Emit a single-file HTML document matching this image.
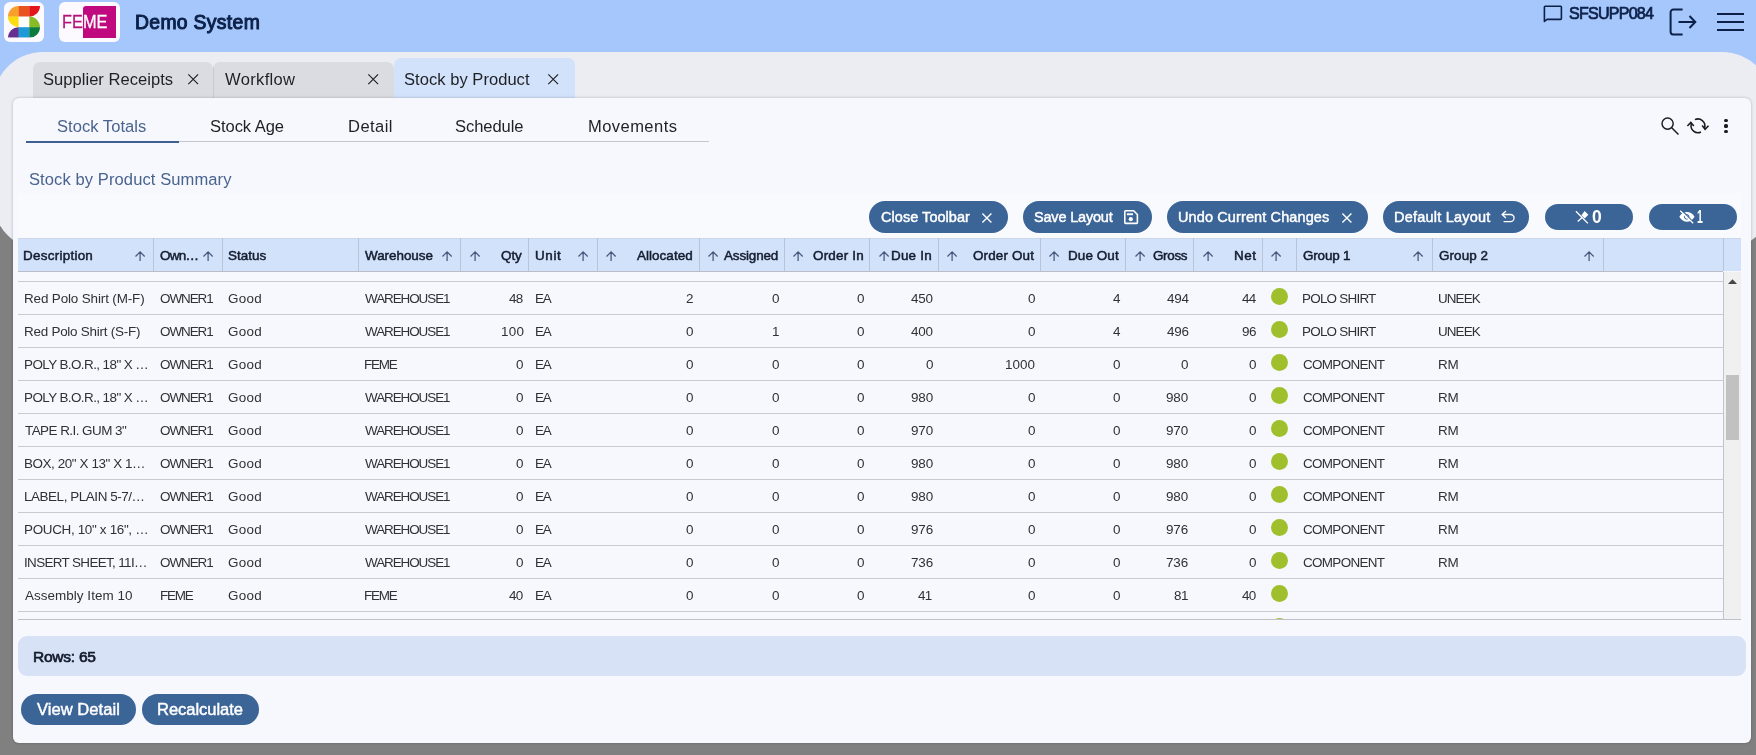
<!DOCTYPE html>
<html lang="en">
<head>
<meta charset="utf-8">
<title>Demo System - Stock by Product</title>
<style>
*{box-sizing:border-box;margin:0;padding:0}
html,body{width:1756px;height:755px;overflow:hidden;background:#808080;font-family:"Liberation Sans",sans-serif}
.a{position:absolute}
.t{position:absolute;white-space:pre;line-height:20px;height:20px}
#stage{left:0;top:0;width:1756px;height:755px;overflow:hidden;will-change:transform}
#top{left:0;top:0;width:1756px;height:200px;background:#a5c7fb}
#gp{left:-7.5px;top:52px;width:1779px;height:198.4px;border-radius:50px;background:#ecedf2}
.logo{background:#fdfaff;border-radius:6px;top:2px;height:40px}
.tab{top:62px;height:36px;background:#dbdce1;border-radius:7px 7px 0 0}
#wp{left:13px;top:98px;width:1738px;height:645px;border-radius:6px;background:#f7f8fd;box-shadow:0 0 3px rgba(0,0,0,.25)}
.pill{background:#3b6497;border-radius:16px}
.hl{background:#cacbd1;height:1px;left:18px;width:1705.5px}
.vb{top:238px;height:33px;width:1px;background:#b9c4da}
.pl{-webkit-text-stroke:0.45px #fff}
.sb{-webkit-text-stroke:0.5px currentColor}
.sb2{-webkit-text-stroke:0.7px currentColor}
.sb3{-webkit-text-stroke:1px currentColor}
.lg{-webkit-text-stroke:0.3px currentColor}
svg{position:absolute;overflow:visible}
.dot{width:17px;height:17px;border-radius:50%;background:#9fc02c;left:1271px}
</style>
</head>
<body>
<div class="a" id="stage">
<div class="a" id="top"></div>
<div class="a" id="gp"></div>
<div class="a logo" style="left:4px;width:40px"></div>
<svg style="left:8px;top:6.2px" width="32" height="31.8" viewBox="0 0 3 3" preserveAspectRatio="none">
<defs><clipPath id="sclip"><path d="M1,2 A1,1 0 0 1 1,0 L3,0 A1,1 0 0 1 2,1 A1,1 0 0 1 2,3 L0,3 A1,1 0 0 1 1,2 Z"/></clipPath></defs>
<g clip-path="url(#sclip)">
<rect x="0" y="0" width="1.02" height="1.02" fill="#f8a02c"/><rect x="1" y="0" width="1.02" height="1.02" fill="#e9531f"/><rect x="2" y="0" width="1" height="1.02" fill="#e3151b"/>
<rect x="0" y="1" width="1.02" height="1.02" fill="#fcdc10"/><rect x="1" y="1" width="1.02" height="1.02" fill="#ffffff"/><rect x="2" y="1" width="1" height="1.02" fill="#88bc27"/>
<rect x="0" y="2" width="1.02" height="1" fill="#65308f"/><rect x="1" y="2" width="1.02" height="1" fill="#1c9bd8"/><rect x="2" y="2" width="1" height="1" fill="#0c7c3d"/>
</g></svg>
<div class="a logo" style="left:59px;width:61px"></div>
<div class="a" style="left:82.6px;top:6.1px;width:33.3px;height:31.7px;background:#c0087f;border-radius:3px 0 0 0"></div>
<svg style="left:1543px;top:5px" width="20" height="18" viewBox="0 0 20 18"><path d="M1.4,16.4 V2.1 a.8,.8 0 0 1 .8,-.8 H17.6 a.8,.8 0 0 1 .8,.8 V13.6 a.8,.8 0 0 1 -.8,.8 H4.0 Z" fill="none" stroke="#0c2048" stroke-width="1.6" stroke-linejoin="round"/></svg>
<svg style="left:1668px;top:8px" width="30" height="28" viewBox="0 0 30 28"><path d="M14.6,1.6 H5.2 a2.6,2.6 0 0 0 -2.6,2.6 V23.8 a2.6,2.6 0 0 0 2.6,2.6 H14.6" fill="none" stroke="#0c2048" stroke-width="2"/><path d="M10.5,14 H27 M21.5,8 L27.3,14 L21.5,20" fill="none" stroke="#0c2048" stroke-width="2"/></svg>
<div class="a" style="left:1717.2px;top:12.8px;width:26.8px;height:2px;background:#0c2048"></div>
<div class="a" style="left:1717.2px;top:21px;width:26.8px;height:2px;background:#0c2048"></div>
<div class="a" style="left:1717.2px;top:29.2px;width:26.8px;height:2px;background:#0c2048"></div>
<div class="a tab" style="left:33.3px;width:179.7px"></div>
<div class="a tab" style="left:213px;width:180.5px"></div>
<div class="a" style="left:212.5px;top:67px;width:1px;height:31px;background:#c9cad0"></div>
<div class="a tab" style="left:393.5px;width:181.5px;top:57.5px;height:41px;background:#d2e2fb"></div>
<div class="a" id="wp"></div>
<svg style="left:187.9px;top:74.4px" width="10.4" height="10.4" viewBox="0 0 10 10"><path d="M0.3,0.3 L9.7,9.7 M9.7,0.3 L0.3,9.7" stroke="#1e1e20" stroke-width="1.1" fill="none"/></svg>
<svg style="left:367.9px;top:74.4px" width="10.4" height="10.4" viewBox="0 0 10 10"><path d="M0.3,0.3 L9.7,9.7 M9.7,0.3 L0.3,9.7" stroke="#1e1e20" stroke-width="1.1" fill="none"/></svg>
<svg style="left:547.6px;top:74.4px" width="10.4" height="10.4" viewBox="0 0 10 10"><path d="M0.3,0.3 L9.7,9.7 M9.7,0.3 L0.3,9.7" stroke="#1e1e20" stroke-width="1.1" fill="none"/></svg>
<div class="a" style="left:26px;top:141px;width:683px;height:1px;background:#c4c6cc"></div>
<div class="a" style="left:26px;top:140.7px;width:152.7px;height:2.2px;background:#3f5f8f"></div>
<svg style="left:1661px;top:117.4px" width="18" height="18" viewBox="0 0 18 18"><circle cx="6.6" cy="6.6" r="5.6" fill="none" stroke="#1c1c1f" stroke-width="1.45"/><path d="M10.7,10.7 L17.5,17.5" stroke="#1c1c1f" stroke-width="1.5"/></svg>
<svg style="left:1687px;top:117px" width="22" height="18" viewBox="0 0 22 18"><path d="M7.93,2.65 A6.9,6.9 0 0 1 17.61,10.64 L18.1,12.2 M13.97,15.05 A6.9,6.9 0 0 1 4.29,7.06 L3.8,5.5" fill="none" stroke="#1c1c1f" stroke-width="1.55"/><path d="M15.2,8.6 L18.1,12.3 L21.5,8.8 M0.4,9.1 L3.8,5.4 L6.8,9.0" fill="none" stroke="#1c1c1f" stroke-width="1.55"/></svg>
<div class="a" style="left:1724.4px;top:118.50px;width:3.2px;height:3.2px;border-radius:50%;background:#1c1c1f"></div>
<div class="a" style="left:1724.4px;top:124.35px;width:3.2px;height:3.2px;border-radius:50%;background:#1c1c1f"></div>
<div class="a" style="left:1724.4px;top:130.20px;width:3.2px;height:3.2px;border-radius:50%;background:#1c1c1f"></div>
<div class="a" style="left:18px;top:193px;width:1723px;height:45px;background:#f9fafe"></div>
<div class="a pill" style="left:868.9px;top:201.2px;width:139.2px;height:31.4px"></div>
<div class="a pill" style="left:1023.2px;top:201.2px;width:128.6px;height:31.4px"></div>
<div class="a pill" style="left:1167.1px;top:201.2px;width:200.7px;height:31.4px"></div>
<div class="a pill" style="left:1383.2px;top:201.2px;width:145.7px;height:31.4px"></div>
<div class="a pill" style="left:1544.8px;top:204px;width:88.4px;height:25.8px"></div>
<div class="a pill" style="left:1648.7px;top:204px;width:88.3px;height:25.8px"></div>
<svg style="left:982.2px;top:212.5px" width="9.8" height="9.8" viewBox="0 0 10 10"><path d="M0.4,0.4 L9.6,9.6 M9.6,0.4 L0.4,9.6" stroke="#fff" stroke-width="1.4" fill="none"/></svg>
<svg style="left:1342.3px;top:212.5px" width="9.8" height="9.8" viewBox="0 0 10 10"><path d="M0.4,0.4 L9.6,9.6 M9.6,0.4 L0.4,9.6" stroke="#fff" stroke-width="1.4" fill="none"/></svg>
<svg style="left:1124px;top:209.9px" width="14.2" height="14.2" viewBox="0 0 14.2 14.2"><path d="M1.6,0.8 H9.7 L13.4,4.5 V12.6 a.8,.8 0 0 1 -.8,.8 H1.6 a.8,.8 0 0 1 -.8,-.8 V1.6 a.8,.8 0 0 1 .8,-.8 Z" fill="none" stroke="#fff" stroke-width="1.6"/><rect x="2.9" y="3.3" width="6.1" height="1.9" fill="#fff"/><circle cx="6.8" cy="9.2" r="2.1" fill="#fff"/></svg>
<svg style="left:1501px;top:210px" width="14" height="13" viewBox="0 0 14 13"><path d="M5,1 L1.1,4.5 L4.9,8 M1.3,4.5 H9.5 a3.55,3.55 0 0 1 0,7.1 H2.6" fill="none" stroke="#fff" stroke-width="1.3"/></svg>
<svg style="left:1575px;top:210px" width="14" height="14" viewBox="0 0 14 14"><path d="M9.6,1.0 L13.4,4.8 L9.6,8.4 L6.4,5.3 Z" fill="#fff"/><path d="M0.9,1.2 L12.9,13.4 M7.4,7.3 L2.7,11.6" stroke="#fff" stroke-width="1.35" fill="none"/></svg>
<svg style="left:1678.6px;top:210.4px" width="16" height="14" viewBox="0 0 16 14"><path d="M0.3,6.8 C2.4,3.2 5,1.9 7.9,1.9 C10.8,1.9 13.4,3.2 15.6,6.8 C13.4,10.4 10.8,11.8 7.9,11.8 C5,11.8 2.4,10.4 0.3,6.8 Z" fill="#fff"/><circle cx="7.7" cy="6.8" r="2.3" fill="none" stroke="#3b6497" stroke-width="1"/><path d="M2.2,-0.2 L15,12.9" stroke="#3b6497" stroke-width="1.3"/><path d="M1.2,0.7 L14.2,13.2" stroke="#fff" stroke-width="1.3"/></svg>
<div class="a" style="left:17.7px;top:238.4px;width:1722.9px;height:33px;background:#d2e2fb"></div>
<div class="a" style="left:17.7px;top:271px;width:1705.8px;height:1px;background:#b9bcc6"></div>
<div class="a" style="left:17.7px;top:238px;width:1722.9px;height:1px;background:#cdd6e6"></div>
<div class="a vb" style="left:153.0px"></div>
<div class="a vb" style="left:222.0px"></div>
<div class="a vb" style="left:358.0px"></div>
<div class="a vb" style="left:460.0px"></div>
<div class="a vb" style="left:528.2px"></div>
<div class="a vb" style="left:596.8px"></div>
<div class="a vb" style="left:698.8px"></div>
<div class="a vb" style="left:783.9px"></div>
<div class="a vb" style="left:869.0px"></div>
<div class="a vb" style="left:938.1px"></div>
<div class="a vb" style="left:1040.1px"></div>
<div class="a vb" style="left:1125.0px"></div>
<div class="a vb" style="left:1193.2px"></div>
<div class="a vb" style="left:1261.9px"></div>
<div class="a vb" style="left:1296.1px"></div>
<div class="a vb" style="left:1431.9px"></div>
<div class="a vb" style="left:1602.8px"></div>
<div class="a vb" style="left:1723.0px"></div>
<svg style="left:134.7px;top:250.8px" width="10.2" height="10" viewBox="0 0 10.2 10"><path d="M5.1,10 V1 M0.5,5.5 L5.1,0.9 L9.7,5.5" fill="none" stroke="#46587b" stroke-width="1.25"/></svg>
<svg style="left:202.7px;top:250.8px" width="10.2" height="10" viewBox="0 0 10.2 10"><path d="M5.1,10 V1 M0.5,5.5 L5.1,0.9 L9.7,5.5" fill="none" stroke="#46587b" stroke-width="1.25"/></svg>
<svg style="left:441.8px;top:250.8px" width="10.2" height="10" viewBox="0 0 10.2 10"><path d="M5.1,10 V1 M0.5,5.5 L5.1,0.9 L9.7,5.5" fill="none" stroke="#46587b" stroke-width="1.25"/></svg>
<svg style="left:469.5px;top:250.8px" width="10.2" height="10" viewBox="0 0 10.2 10"><path d="M5.1,10 V1 M0.5,5.5 L5.1,0.9 L9.7,5.5" fill="none" stroke="#46587b" stroke-width="1.25"/></svg>
<svg style="left:578px;top:250.8px" width="10.2" height="10" viewBox="0 0 10.2 10"><path d="M5.1,10 V1 M0.5,5.5 L5.1,0.9 L9.7,5.5" fill="none" stroke="#46587b" stroke-width="1.25"/></svg>
<svg style="left:605.9px;top:250.8px" width="10.2" height="10" viewBox="0 0 10.2 10"><path d="M5.1,10 V1 M0.5,5.5 L5.1,0.9 L9.7,5.5" fill="none" stroke="#46587b" stroke-width="1.25"/></svg>
<svg style="left:708.2px;top:250.8px" width="10.2" height="10" viewBox="0 0 10.2 10"><path d="M5.1,10 V1 M0.5,5.5 L5.1,0.9 L9.7,5.5" fill="none" stroke="#46587b" stroke-width="1.25"/></svg>
<svg style="left:793.3px;top:250.8px" width="10.2" height="10" viewBox="0 0 10.2 10"><path d="M5.1,10 V1 M0.5,5.5 L5.1,0.9 L9.7,5.5" fill="none" stroke="#46587b" stroke-width="1.25"/></svg>
<svg style="left:878.5px;top:250.8px" width="10.2" height="10" viewBox="0 0 10.2 10"><path d="M5.1,10 V1 M0.5,5.5 L5.1,0.9 L9.7,5.5" fill="none" stroke="#46587b" stroke-width="1.25"/></svg>
<svg style="left:947.1px;top:250.8px" width="10.2" height="10" viewBox="0 0 10.2 10"><path d="M5.1,10 V1 M0.5,5.5 L5.1,0.9 L9.7,5.5" fill="none" stroke="#46587b" stroke-width="1.25"/></svg>
<svg style="left:1049.1px;top:250.8px" width="10.2" height="10" viewBox="0 0 10.2 10"><path d="M5.1,10 V1 M0.5,5.5 L5.1,0.9 L9.7,5.5" fill="none" stroke="#46587b" stroke-width="1.25"/></svg>
<svg style="left:1134.8px;top:250.8px" width="10.2" height="10" viewBox="0 0 10.2 10"><path d="M5.1,10 V1 M0.5,5.5 L5.1,0.9 L9.7,5.5" fill="none" stroke="#46587b" stroke-width="1.25"/></svg>
<svg style="left:1202.8px;top:250.8px" width="10.2" height="10" viewBox="0 0 10.2 10"><path d="M5.1,10 V1 M0.5,5.5 L5.1,0.9 L9.7,5.5" fill="none" stroke="#46587b" stroke-width="1.25"/></svg>
<svg style="left:1270.6px;top:250.8px" width="10.2" height="10" viewBox="0 0 10.2 10"><path d="M5.1,10 V1 M0.5,5.5 L5.1,0.9 L9.7,5.5" fill="none" stroke="#46587b" stroke-width="1.25"/></svg>
<svg style="left:1413.2px;top:250.8px" width="10.2" height="10" viewBox="0 0 10.2 10"><path d="M5.1,10 V1 M0.5,5.5 L5.1,0.9 L9.7,5.5" fill="none" stroke="#46587b" stroke-width="1.25"/></svg>
<svg style="left:1583.5px;top:250.8px" width="10.2" height="10" viewBox="0 0 10.2 10"><path d="M5.1,10 V1 M0.5,5.5 L5.1,0.9 L9.7,5.5" fill="none" stroke="#46587b" stroke-width="1.25"/></svg>
<div class="a hl" style="top:281px"></div>
<div class="a hl" style="top:314px"></div>
<div class="a hl" style="top:347px"></div>
<div class="a hl" style="top:380px"></div>
<div class="a hl" style="top:413px"></div>
<div class="a hl" style="top:446px"></div>
<div class="a hl" style="top:479px"></div>
<div class="a hl" style="top:512px"></div>
<div class="a hl" style="top:545px"></div>
<div class="a hl" style="top:578px"></div>
<div class="a hl" style="top:611px"></div>
<div class="a" style="left:17.7px;top:619px;width:1723px;height:1px;background:#c0c1c8"></div>
<div class="a dot" style="top:288.0px"></div>
<div class="a dot" style="top:321.0px"></div>
<div class="a dot" style="top:354.0px"></div>
<div class="a dot" style="top:387.0px"></div>
<div class="a dot" style="top:420.0px"></div>
<div class="a dot" style="top:453.0px"></div>
<div class="a dot" style="top:486.0px"></div>
<div class="a dot" style="top:519.0px"></div>
<div class="a dot" style="top:552.0px"></div>
<div class="a dot" style="top:585.0px"></div>
<div class="a" style="left:1271.1px;top:617.9px;width:17px;height:1.2px;overflow:hidden"><div class="dot" style="left:0;top:0"></div></div>
<div class="a" style="left:1723px;top:271.5px;width:17.6px;height:347.5px;background:#f0f0f0;border-left:1px solid #c3c4ca"></div>
<div class="a" style="left:1726px;top:374.8px;width:12.9px;height:65.4px;background:#c1c1c1"></div>
<svg style="left:1728px;top:278.6px" width="9" height="5" viewBox="0 0 9 5"><path d="M0,5 L4.5,0.3 L9,5 Z" fill="#454545"/></svg>
<div class="a" style="left:18px;top:636px;width:1728px;height:40px;border-radius:9px;background:#d8e2f6"></div>
<div class="a pill" style="left:21.1px;top:693.5px;width:115px;height:31.3px"></div>
<div class="a pill" style="left:142px;top:693.5px;width:117px;height:31.3px"></div>
<span class="t sb3" style="left:135.00px;top:12.00px;font-size:19.35px;color:#0c2048;letter-spacing:0.329px;">Demo System</span>
<span class="t sb2" style="left:1569.00px;top:3.00px;font-size:16.04px;color:#0c2048;letter-spacing:-0.748px;">SFSUPP084</span>
<span class="t lg" style="left:62.10px;top:12.00px;font-size:18.63px;color:#b3127a;transform:scaleX(0.875);transform-origin:0 0;">FE</span>
<span class="t lg" style="left:83.49px;top:12.00px;font-size:18.63px;color:#fff;transform:scaleX(0.878);transform-origin:0 0;">ME</span>
<span class="t " style="left:43.00px;top:70.00px;font-size:16.56px;color:#1f2024;letter-spacing:0.023px;">Supplier Receipts</span>
<span class="t " style="left:225.00px;top:70.00px;font-size:16.56px;color:#1f2024;letter-spacing:0.334px;">Workflow</span>
<span class="t " style="left:404.00px;top:70.00px;font-size:16.56px;color:#1f2024;letter-spacing:0.029px;">Stock by Product</span>
<span class="t " style="left:57.00px;top:117.00px;font-size:16.56px;color:#49638f;letter-spacing:0.032px;">Stock Totals</span>
<span class="t " style="left:210.00px;top:117.00px;font-size:16.56px;color:#1f2024;letter-spacing:-0.062px;">Stock Age</span>
<span class="t " style="left:348.00px;top:117.00px;font-size:16.56px;color:#1f2024;letter-spacing:0.448px;">Detail</span>
<span class="t " style="left:455.00px;top:117.00px;font-size:16.56px;color:#1f2024;letter-spacing:-0.065px;">Schedule</span>
<span class="t " style="left:588.00px;top:117.00px;font-size:16.56px;color:#1f2024;letter-spacing:0.425px;">Movements</span>
<span class="t " style="left:29.00px;top:170.00px;font-size:16.56px;color:#49638f;letter-spacing:0.087px;">Stock by Product Summary</span>
<span class="t pl" style="left:881.00px;top:207.00px;font-size:14.49px;color:#fff;letter-spacing:0.050px;">Close Toolbar</span>
<span class="t pl" style="left:1034.00px;top:207.00px;font-size:14.49px;color:#fff;letter-spacing:-0.177px;">Save Layout</span>
<span class="t pl" style="left:1178.00px;top:207.00px;font-size:14.49px;color:#fff;letter-spacing:0.121px;">Undo Current Changes</span>
<span class="t pl" style="left:1394.00px;top:207.00px;font-size:14.49px;color:#fff;letter-spacing:0.219px;">Default Layout</span>
<span class="t " style="left:1592.46px;top:207.00px;font-size:17.59px;color:#fff;font-weight:700;transform:scaleX(0.993);transform-origin:0 0;">0</span>
<span class="t " style="left:1697.16px;top:207.00px;font-size:17.59px;color:#fff;font-weight:700;transform:scaleX(0.601);transform-origin:0 0;">1</span>
<span class="t sb" style="left:23.00px;top:246.00px;font-size:13.45px;color:#141c2e;letter-spacing:0.262px;">Description</span>
<span class="t sb" style="left:160.00px;top:246.00px;font-size:13.45px;color:#141c2e;letter-spacing:-0.708px;">Own…</span>
<span class="t sb" style="left:228.00px;top:246.00px;font-size:13.45px;color:#141c2e;letter-spacing:0.048px;">Status</span>
<span class="t sb" style="left:365.00px;top:246.00px;font-size:13.45px;color:#141c2e;letter-spacing:-0.033px;">Warehouse</span>
<span class="t sb" style="left:501.00px;top:246.00px;font-size:13.45px;color:#141c2e;letter-spacing:-0.047px;">Qty</span>
<span class="t sb" style="left:535.00px;top:246.00px;font-size:13.45px;color:#141c2e;letter-spacing:0.607px;">Unit</span>
<span class="t sb" style="left:637.00px;top:246.00px;font-size:13.45px;color:#141c2e;letter-spacing:0.049px;">Allocated</span>
<span class="t sb" style="left:724.00px;top:246.00px;font-size:13.45px;color:#141c2e;letter-spacing:-0.144px;">Assigned</span>
<span class="t sb" style="left:813.00px;top:246.00px;font-size:13.45px;color:#141c2e;letter-spacing:0.211px;">Order In</span>
<span class="t sb" style="left:891.00px;top:246.00px;font-size:13.45px;color:#141c2e;letter-spacing:0.220px;">Due In</span>
<span class="t sb" style="left:973.00px;top:246.00px;font-size:13.45px;color:#141c2e;letter-spacing:0.149px;">Order Out</span>
<span class="t sb" style="left:1068.00px;top:246.00px;font-size:13.45px;color:#141c2e;letter-spacing:0.106px;">Due Out</span>
<span class="t sb" style="left:1153.00px;top:246.00px;font-size:13.45px;color:#141c2e;letter-spacing:-0.328px;">Gross</span>
<span class="t sb" style="left:1234.00px;top:246.00px;font-size:13.45px;color:#141c2e;letter-spacing:0.518px;">Net</span>
<span class="t sb" style="left:1303.00px;top:246.00px;font-size:13.45px;color:#141c2e;letter-spacing:-0.170px;">Group 1</span>
<span class="t sb" style="left:1439.00px;top:246.00px;font-size:13.45px;color:#141c2e;letter-spacing:0.082px;">Group 2</span>
<span class="t " style="left:24.00px;top:289.00px;font-size:13.45px;color:#303035;letter-spacing:-0.136px;">Red Polo Shirt (M-F)</span>
<span class="t " style="left:160.00px;top:289.00px;font-size:13.45px;color:#303035;letter-spacing:-1.061px;">OWNER1</span>
<span class="t " style="left:228.00px;top:289.00px;font-size:13.45px;color:#303035;letter-spacing:0.280px;">Good</span>
<span class="t " style="left:365.00px;top:289.00px;font-size:13.45px;color:#303035;letter-spacing:-1.058px;">WAREHOUSE1</span>
<span class="t " style="left:509.00px;top:289.00px;font-size:13.45px;color:#303035;letter-spacing:-0.643px;">48</span>
<span class="t " style="left:686.00px;top:289.00px;font-size:13.45px;color:#303035;">2</span>
<span class="t " style="left:772.00px;top:289.00px;font-size:13.45px;color:#303035;">0</span>
<span class="t " style="left:857.00px;top:289.00px;font-size:13.45px;color:#303035;">0</span>
<span class="t " style="left:911.00px;top:289.00px;font-size:13.45px;color:#303035;letter-spacing:-0.212px;">450</span>
<span class="t " style="left:1028.00px;top:289.00px;font-size:13.45px;color:#303035;">0</span>
<span class="t " style="left:1113.00px;top:289.00px;font-size:13.45px;color:#303035;">4</span>
<span class="t " style="left:1167.00px;top:289.00px;font-size:13.45px;color:#303035;letter-spacing:-0.234px;">494</span>
<span class="t " style="left:1242.00px;top:289.00px;font-size:13.45px;color:#303035;letter-spacing:-0.755px;">44</span>
<span class="t " style="left:535.00px;top:289.00px;font-size:13.45px;color:#303035;letter-spacing:-1.200px;">EA</span>
<span class="t " style="left:1302.00px;top:289.00px;font-size:13.45px;color:#303035;letter-spacing:-0.759px;">POLO SHIRT</span>
<span class="t " style="left:1438.00px;top:289.00px;font-size:13.45px;color:#303035;letter-spacing:-0.905px;">UNEEK</span>
<span class="t " style="left:24.00px;top:322.00px;font-size:13.45px;color:#303035;letter-spacing:-0.242px;">Red Polo Shirt (S-F)</span>
<span class="t " style="left:160.00px;top:322.00px;font-size:13.45px;color:#303035;letter-spacing:-1.061px;">OWNER1</span>
<span class="t " style="left:228.00px;top:322.00px;font-size:13.45px;color:#303035;letter-spacing:0.280px;">Good</span>
<span class="t " style="left:365.00px;top:322.00px;font-size:13.45px;color:#303035;letter-spacing:-1.058px;">WAREHOUSE1</span>
<span class="t " style="left:501.00px;top:322.00px;font-size:13.45px;color:#303035;letter-spacing:0.232px;">100</span>
<span class="t " style="left:686.00px;top:322.00px;font-size:13.45px;color:#303035;">0</span>
<span class="t " style="left:772.00px;top:322.00px;font-size:13.45px;color:#303035;">1</span>
<span class="t " style="left:857.00px;top:322.00px;font-size:13.45px;color:#303035;">0</span>
<span class="t " style="left:911.00px;top:322.00px;font-size:13.45px;color:#303035;letter-spacing:-0.212px;">400</span>
<span class="t " style="left:1028.00px;top:322.00px;font-size:13.45px;color:#303035;">0</span>
<span class="t " style="left:1113.00px;top:322.00px;font-size:13.45px;color:#303035;">4</span>
<span class="t " style="left:1167.00px;top:322.00px;font-size:13.45px;color:#303035;letter-spacing:-0.199px;">496</span>
<span class="t " style="left:1242.00px;top:322.00px;font-size:13.45px;color:#303035;letter-spacing:-0.417px;">96</span>
<span class="t " style="left:535.00px;top:322.00px;font-size:13.45px;color:#303035;letter-spacing:-1.200px;">EA</span>
<span class="t " style="left:1302.00px;top:322.00px;font-size:13.45px;color:#303035;letter-spacing:-0.759px;">POLO SHIRT</span>
<span class="t " style="left:1438.00px;top:322.00px;font-size:13.45px;color:#303035;letter-spacing:-0.905px;">UNEEK</span>
<span class="t " style="left:24.00px;top:355.00px;font-size:13.45px;color:#303035;letter-spacing:-0.578px;">POLY B.O.R., 18" X …</span>
<span class="t " style="left:160.00px;top:355.00px;font-size:13.45px;color:#303035;letter-spacing:-1.061px;">OWNER1</span>
<span class="t " style="left:228.00px;top:355.00px;font-size:13.45px;color:#303035;letter-spacing:0.280px;">Good</span>
<span class="t " style="left:364.00px;top:355.00px;font-size:13.45px;color:#303035;letter-spacing:-1.175px;">FEME</span>
<span class="t " style="left:516.00px;top:355.00px;font-size:13.45px;color:#303035;">0</span>
<span class="t " style="left:686.00px;top:355.00px;font-size:13.45px;color:#303035;">0</span>
<span class="t " style="left:772.00px;top:355.00px;font-size:13.45px;color:#303035;">0</span>
<span class="t " style="left:857.00px;top:355.00px;font-size:13.45px;color:#303035;">0</span>
<span class="t " style="left:926.00px;top:355.00px;font-size:13.45px;color:#303035;">0</span>
<span class="t " style="left:1005.00px;top:355.00px;font-size:13.45px;color:#303035;letter-spacing:0.024px;">1000</span>
<span class="t " style="left:1113.00px;top:355.00px;font-size:13.45px;color:#303035;">0</span>
<span class="t " style="left:1181.00px;top:355.00px;font-size:13.45px;color:#303035;">0</span>
<span class="t " style="left:1249.00px;top:355.00px;font-size:13.45px;color:#303035;">0</span>
<span class="t " style="left:535.00px;top:355.00px;font-size:13.45px;color:#303035;letter-spacing:-1.200px;">EA</span>
<span class="t " style="left:1303.00px;top:355.00px;font-size:13.45px;color:#303035;letter-spacing:-0.665px;">COMPONENT</span>
<span class="t " style="left:1438.00px;top:355.00px;font-size:13.45px;color:#303035;letter-spacing:-0.304px;">RM</span>
<span class="t " style="left:24.00px;top:388.00px;font-size:13.45px;color:#303035;letter-spacing:-0.578px;">POLY B.O.R., 18" X …</span>
<span class="t " style="left:160.00px;top:388.00px;font-size:13.45px;color:#303035;letter-spacing:-1.061px;">OWNER1</span>
<span class="t " style="left:228.00px;top:388.00px;font-size:13.45px;color:#303035;letter-spacing:0.280px;">Good</span>
<span class="t " style="left:365.00px;top:388.00px;font-size:13.45px;color:#303035;letter-spacing:-1.058px;">WAREHOUSE1</span>
<span class="t " style="left:516.00px;top:388.00px;font-size:13.45px;color:#303035;">0</span>
<span class="t " style="left:686.00px;top:388.00px;font-size:13.45px;color:#303035;">0</span>
<span class="t " style="left:772.00px;top:388.00px;font-size:13.45px;color:#303035;">0</span>
<span class="t " style="left:857.00px;top:388.00px;font-size:13.45px;color:#303035;">0</span>
<span class="t " style="left:911.00px;top:388.00px;font-size:13.45px;color:#303035;letter-spacing:-0.113px;">980</span>
<span class="t " style="left:1028.00px;top:388.00px;font-size:13.45px;color:#303035;">0</span>
<span class="t " style="left:1113.00px;top:388.00px;font-size:13.45px;color:#303035;">0</span>
<span class="t " style="left:1166.00px;top:388.00px;font-size:13.45px;color:#303035;letter-spacing:-0.113px;">980</span>
<span class="t " style="left:1249.00px;top:388.00px;font-size:13.45px;color:#303035;">0</span>
<span class="t " style="left:535.00px;top:388.00px;font-size:13.45px;color:#303035;letter-spacing:-1.200px;">EA</span>
<span class="t " style="left:1303.00px;top:388.00px;font-size:13.45px;color:#303035;letter-spacing:-0.665px;">COMPONENT</span>
<span class="t " style="left:1438.00px;top:388.00px;font-size:13.45px;color:#303035;letter-spacing:-0.304px;">RM</span>
<span class="t " style="left:25.00px;top:421.00px;font-size:13.45px;color:#303035;letter-spacing:-0.541px;">TAPE R.I. GUM 3"</span>
<span class="t " style="left:160.00px;top:421.00px;font-size:13.45px;color:#303035;letter-spacing:-1.061px;">OWNER1</span>
<span class="t " style="left:228.00px;top:421.00px;font-size:13.45px;color:#303035;letter-spacing:0.280px;">Good</span>
<span class="t " style="left:365.00px;top:421.00px;font-size:13.45px;color:#303035;letter-spacing:-1.058px;">WAREHOUSE1</span>
<span class="t " style="left:516.00px;top:421.00px;font-size:13.45px;color:#303035;">0</span>
<span class="t " style="left:686.00px;top:421.00px;font-size:13.45px;color:#303035;">0</span>
<span class="t " style="left:772.00px;top:421.00px;font-size:13.45px;color:#303035;">0</span>
<span class="t " style="left:857.00px;top:421.00px;font-size:13.45px;color:#303035;">0</span>
<span class="t " style="left:911.00px;top:421.00px;font-size:13.45px;color:#303035;letter-spacing:-0.113px;">970</span>
<span class="t " style="left:1028.00px;top:421.00px;font-size:13.45px;color:#303035;">0</span>
<span class="t " style="left:1113.00px;top:421.00px;font-size:13.45px;color:#303035;">0</span>
<span class="t " style="left:1166.00px;top:421.00px;font-size:13.45px;color:#303035;letter-spacing:-0.113px;">970</span>
<span class="t " style="left:1249.00px;top:421.00px;font-size:13.45px;color:#303035;">0</span>
<span class="t " style="left:535.00px;top:421.00px;font-size:13.45px;color:#303035;letter-spacing:-1.200px;">EA</span>
<span class="t " style="left:1303.00px;top:421.00px;font-size:13.45px;color:#303035;letter-spacing:-0.665px;">COMPONENT</span>
<span class="t " style="left:1438.00px;top:421.00px;font-size:13.45px;color:#303035;letter-spacing:-0.304px;">RM</span>
<span class="t " style="left:24.00px;top:454.00px;font-size:13.45px;color:#303035;letter-spacing:-0.418px;">BOX, 20" X 13" X 1…</span>
<span class="t " style="left:160.00px;top:454.00px;font-size:13.45px;color:#303035;letter-spacing:-1.061px;">OWNER1</span>
<span class="t " style="left:228.00px;top:454.00px;font-size:13.45px;color:#303035;letter-spacing:0.280px;">Good</span>
<span class="t " style="left:365.00px;top:454.00px;font-size:13.45px;color:#303035;letter-spacing:-1.058px;">WAREHOUSE1</span>
<span class="t " style="left:516.00px;top:454.00px;font-size:13.45px;color:#303035;">0</span>
<span class="t " style="left:686.00px;top:454.00px;font-size:13.45px;color:#303035;">0</span>
<span class="t " style="left:772.00px;top:454.00px;font-size:13.45px;color:#303035;">0</span>
<span class="t " style="left:857.00px;top:454.00px;font-size:13.45px;color:#303035;">0</span>
<span class="t " style="left:911.00px;top:454.00px;font-size:13.45px;color:#303035;letter-spacing:-0.113px;">980</span>
<span class="t " style="left:1028.00px;top:454.00px;font-size:13.45px;color:#303035;">0</span>
<span class="t " style="left:1113.00px;top:454.00px;font-size:13.45px;color:#303035;">0</span>
<span class="t " style="left:1166.00px;top:454.00px;font-size:13.45px;color:#303035;letter-spacing:-0.113px;">980</span>
<span class="t " style="left:1249.00px;top:454.00px;font-size:13.45px;color:#303035;">0</span>
<span class="t " style="left:535.00px;top:454.00px;font-size:13.45px;color:#303035;letter-spacing:-1.200px;">EA</span>
<span class="t " style="left:1303.00px;top:454.00px;font-size:13.45px;color:#303035;letter-spacing:-0.665px;">COMPONENT</span>
<span class="t " style="left:1438.00px;top:454.00px;font-size:13.45px;color:#303035;letter-spacing:-0.304px;">RM</span>
<span class="t " style="left:24.00px;top:487.00px;font-size:13.45px;color:#303035;letter-spacing:-0.436px;">LABEL, PLAIN 5-7/…</span>
<span class="t " style="left:160.00px;top:487.00px;font-size:13.45px;color:#303035;letter-spacing:-1.061px;">OWNER1</span>
<span class="t " style="left:228.00px;top:487.00px;font-size:13.45px;color:#303035;letter-spacing:0.280px;">Good</span>
<span class="t " style="left:365.00px;top:487.00px;font-size:13.45px;color:#303035;letter-spacing:-1.058px;">WAREHOUSE1</span>
<span class="t " style="left:516.00px;top:487.00px;font-size:13.45px;color:#303035;">0</span>
<span class="t " style="left:686.00px;top:487.00px;font-size:13.45px;color:#303035;">0</span>
<span class="t " style="left:772.00px;top:487.00px;font-size:13.45px;color:#303035;">0</span>
<span class="t " style="left:857.00px;top:487.00px;font-size:13.45px;color:#303035;">0</span>
<span class="t " style="left:911.00px;top:487.00px;font-size:13.45px;color:#303035;letter-spacing:-0.113px;">980</span>
<span class="t " style="left:1028.00px;top:487.00px;font-size:13.45px;color:#303035;">0</span>
<span class="t " style="left:1113.00px;top:487.00px;font-size:13.45px;color:#303035;">0</span>
<span class="t " style="left:1166.00px;top:487.00px;font-size:13.45px;color:#303035;letter-spacing:-0.113px;">980</span>
<span class="t " style="left:1249.00px;top:487.00px;font-size:13.45px;color:#303035;">0</span>
<span class="t " style="left:535.00px;top:487.00px;font-size:13.45px;color:#303035;letter-spacing:-1.200px;">EA</span>
<span class="t " style="left:1303.00px;top:487.00px;font-size:13.45px;color:#303035;letter-spacing:-0.665px;">COMPONENT</span>
<span class="t " style="left:1438.00px;top:487.00px;font-size:13.45px;color:#303035;letter-spacing:-0.304px;">RM</span>
<span class="t " style="left:24.00px;top:520.00px;font-size:13.45px;color:#303035;letter-spacing:-0.328px;">POUCH, 10" x 16", …</span>
<span class="t " style="left:160.00px;top:520.00px;font-size:13.45px;color:#303035;letter-spacing:-1.061px;">OWNER1</span>
<span class="t " style="left:228.00px;top:520.00px;font-size:13.45px;color:#303035;letter-spacing:0.280px;">Good</span>
<span class="t " style="left:365.00px;top:520.00px;font-size:13.45px;color:#303035;letter-spacing:-1.058px;">WAREHOUSE1</span>
<span class="t " style="left:516.00px;top:520.00px;font-size:13.45px;color:#303035;">0</span>
<span class="t " style="left:686.00px;top:520.00px;font-size:13.45px;color:#303035;">0</span>
<span class="t " style="left:772.00px;top:520.00px;font-size:13.45px;color:#303035;">0</span>
<span class="t " style="left:857.00px;top:520.00px;font-size:13.45px;color:#303035;">0</span>
<span class="t " style="left:911.00px;top:520.00px;font-size:13.45px;color:#303035;letter-spacing:-0.100px;">976</span>
<span class="t " style="left:1028.00px;top:520.00px;font-size:13.45px;color:#303035;">0</span>
<span class="t " style="left:1113.00px;top:520.00px;font-size:13.45px;color:#303035;">0</span>
<span class="t " style="left:1166.00px;top:520.00px;font-size:13.45px;color:#303035;letter-spacing:-0.100px;">976</span>
<span class="t " style="left:1249.00px;top:520.00px;font-size:13.45px;color:#303035;">0</span>
<span class="t " style="left:535.00px;top:520.00px;font-size:13.45px;color:#303035;letter-spacing:-1.200px;">EA</span>
<span class="t " style="left:1303.00px;top:520.00px;font-size:13.45px;color:#303035;letter-spacing:-0.665px;">COMPONENT</span>
<span class="t " style="left:1438.00px;top:520.00px;font-size:13.45px;color:#303035;letter-spacing:-0.304px;">RM</span>
<span class="t " style="left:24.00px;top:553.00px;font-size:13.45px;color:#303035;letter-spacing:-0.644px;">INSERT SHEET, 11I…</span>
<span class="t " style="left:160.00px;top:553.00px;font-size:13.45px;color:#303035;letter-spacing:-1.061px;">OWNER1</span>
<span class="t " style="left:228.00px;top:553.00px;font-size:13.45px;color:#303035;letter-spacing:0.280px;">Good</span>
<span class="t " style="left:365.00px;top:553.00px;font-size:13.45px;color:#303035;letter-spacing:-1.058px;">WAREHOUSE1</span>
<span class="t " style="left:516.00px;top:553.00px;font-size:13.45px;color:#303035;">0</span>
<span class="t " style="left:686.00px;top:553.00px;font-size:13.45px;color:#303035;">0</span>
<span class="t " style="left:772.00px;top:553.00px;font-size:13.45px;color:#303035;">0</span>
<span class="t " style="left:857.00px;top:553.00px;font-size:13.45px;color:#303035;">0</span>
<span class="t " style="left:911.00px;top:553.00px;font-size:13.45px;color:#303035;letter-spacing:-0.106px;">736</span>
<span class="t " style="left:1028.00px;top:553.00px;font-size:13.45px;color:#303035;">0</span>
<span class="t " style="left:1113.00px;top:553.00px;font-size:13.45px;color:#303035;">0</span>
<span class="t " style="left:1166.00px;top:553.00px;font-size:13.45px;color:#303035;letter-spacing:-0.106px;">736</span>
<span class="t " style="left:1249.00px;top:553.00px;font-size:13.45px;color:#303035;">0</span>
<span class="t " style="left:535.00px;top:553.00px;font-size:13.45px;color:#303035;letter-spacing:-1.200px;">EA</span>
<span class="t " style="left:1303.00px;top:553.00px;font-size:13.45px;color:#303035;letter-spacing:-0.665px;">COMPONENT</span>
<span class="t " style="left:1438.00px;top:553.00px;font-size:13.45px;color:#303035;letter-spacing:-0.304px;">RM</span>
<span class="t " style="left:25.00px;top:586.00px;font-size:13.45px;color:#303035;letter-spacing:0.044px;">Assembly Item 10</span>
<span class="t " style="left:160.00px;top:586.00px;font-size:13.45px;color:#303035;letter-spacing:-1.175px;">FEME</span>
<span class="t " style="left:228.00px;top:586.00px;font-size:13.45px;color:#303035;letter-spacing:0.280px;">Good</span>
<span class="t " style="left:364.00px;top:586.00px;font-size:13.45px;color:#303035;letter-spacing:-1.175px;">FEME</span>
<span class="t " style="left:509.00px;top:586.00px;font-size:13.45px;color:#303035;letter-spacing:-0.678px;">40</span>
<span class="t " style="left:686.00px;top:586.00px;font-size:13.45px;color:#303035;">0</span>
<span class="t " style="left:772.00px;top:586.00px;font-size:13.45px;color:#303035;">0</span>
<span class="t " style="left:857.00px;top:586.00px;font-size:13.45px;color:#303035;">0</span>
<span class="t " style="left:918.00px;top:586.00px;font-size:13.45px;color:#303035;letter-spacing:-0.626px;">41</span>
<span class="t " style="left:1028.00px;top:586.00px;font-size:13.45px;color:#303035;">0</span>
<span class="t " style="left:1113.00px;top:586.00px;font-size:13.45px;color:#303035;">0</span>
<span class="t " style="left:1174.00px;top:586.00px;font-size:13.45px;color:#303035;letter-spacing:-0.458px;">81</span>
<span class="t " style="left:1242.00px;top:586.00px;font-size:13.45px;color:#303035;letter-spacing:-0.678px;">40</span>
<span class="t " style="left:535.00px;top:586.00px;font-size:13.45px;color:#303035;letter-spacing:-1.200px;">EA</span>
<span class="t sb2" style="left:33.00px;top:647.00px;font-size:15.52px;color:#141c2e;letter-spacing:-0.239px;">Rows: 65</span>
<span class="t pl" style="left:37.00px;top:700.00px;font-size:16.56px;color:#fff;letter-spacing:0.040px;">View Detail</span>
<span class="t pl" style="left:157.00px;top:700.00px;font-size:16.56px;color:#fff;letter-spacing:-0.055px;">Recalculate</span>
</div>
</body>
</html>
